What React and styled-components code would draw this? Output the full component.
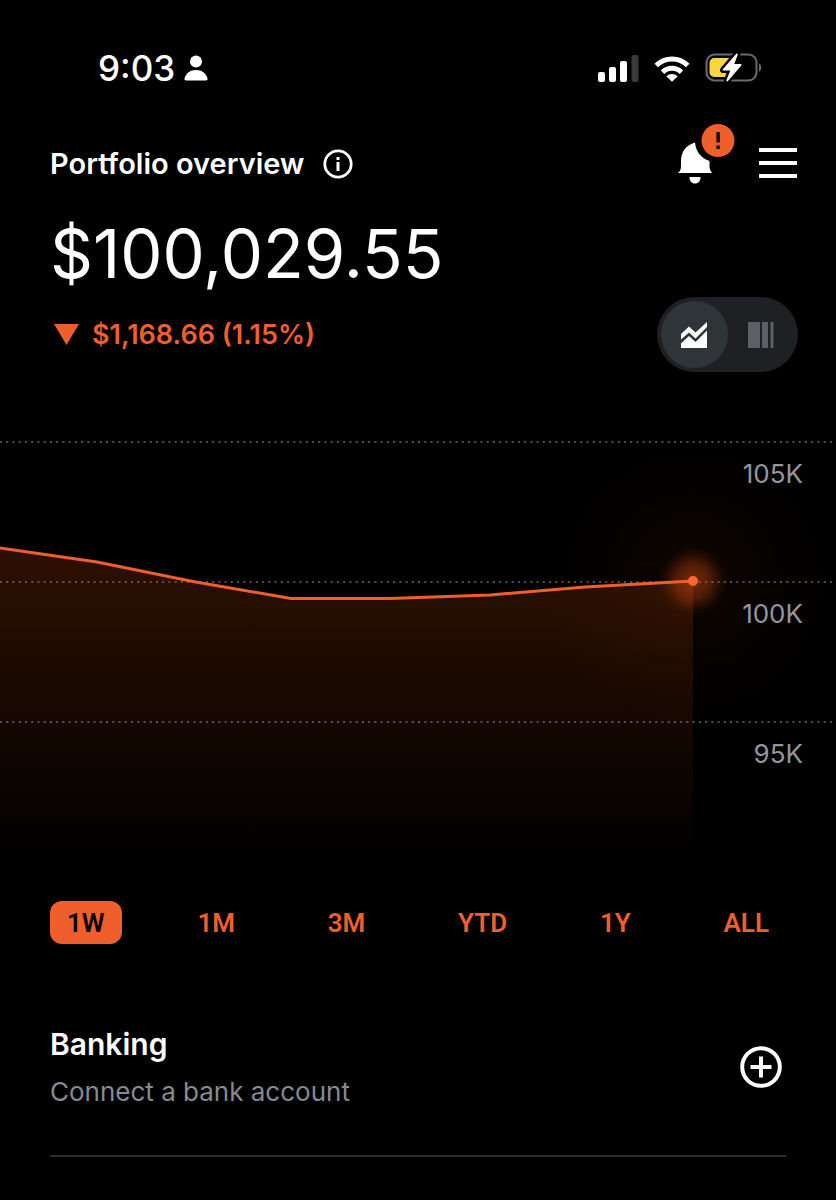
import React, { useState } from "react";
import styled, { createGlobalStyle } from "styled-components";

const ORANGE = "#ef5f2b";

const GlobalStyle = createGlobalStyle`
  * { box-sizing: border-box; }
  body {
    margin: 0;
    background: #000;
    color: #fff;
    font-family: Inter, "Liberation Sans", sans-serif;
  }
  button { font: inherit; color: inherit; background: none; border: 0; padding: 0; cursor: pointer; }
  h1, h2, p { margin: 0; }
  svg { display: block; }
`;

const Screen = styled.main`
  min-height: 100vh;
  padding-top: 40px;
`;

const StatusBar = styled.div`
  display: flex;
  align-items: center;
  justify-content: space-between;
  height: 56px;
  padding: 0 73px 0 98px;
`;

const StatusGroup = styled.div`
  display: flex;
  align-items: center;
  gap: ${(p) => p.$gap}px;
`;

const Time = styled.span`
  font-size: 35px;
  line-height: 40px;
  font-weight: 500;
`;

const Header = styled.header`
  display: flex;
  align-items: center;
  justify-content: space-between;
  height: 80px;
  margin-top: 24px;
  padding: 6px 39px 0 50px;
`;

const TitleGroup = styled.div`
  display: flex;
  align-items: center;
  gap: 19px;
  padding-top: 2px;
`;

const Title = styled.h1`
  font-size: 29px;
  line-height: 40px;
  font-weight: 600;
`;

const Actions = styled.div`
  display: flex;
  align-items: center;
  gap: 22px;
`;

const Amount = styled.p`
  padding: 0 50px;
  margin-top: 14px;
  font-size: 67px;
  line-height: 80px;
  font-weight: 400;
`;

const ChangeRow = styled.div`
  display: flex;
  align-items: center;
  justify-content: space-between;
  margin-top: 3px;
  padding: 0 38px 0 54px;
`;

const Change = styled.p`
  display: flex;
  align-items: center;
  gap: 13px;
  color: ${ORANGE};
  font-size: 27px;
  line-height: 32px;
  font-weight: 600;
`;

const Toggle = styled.div`
  display: flex;
  justify-content: space-between;
  width: 141px;
  padding: 4px;
  border-radius: 38px;
  background: #1f2023;
`;

const ToggleButton = styled.button`
  display: grid;
  place-items: center;
  width: 67px;
  height: 67px;
  border-radius: 50%;
  background: ${(p) => (p.$active ? "#2f3439" : "transparent")};
  color: ${(p) => (p.$active ? "#fff" : "#5b6064")};
`;

const Chart = styled.svg`
  width: 100%;
  height: auto;
  margin-top: 28px;
`;

const AxisLabel = styled.text`
  font-size: 26px;
  font-weight: 400;
  fill: #94969c;
  text-anchor: end;
`;

const Ranges = styled.div`
  display: flex;
  justify-content: space-between;
  margin-top: 41px;
  padding: 0 50px;
`;

const RangeButton = styled.button`
  height: 43px;
  padding: 2px 17px 0;
  border-radius: 12px;
  font-family: Roboto, Inter, sans-serif;
  font-size: 26px;
  line-height: 41px;
  font-weight: 600;
  background: ${(p) => (p.$active ? ORANGE : "transparent")};
  color: ${(p) => (p.$active ? "#000" : ORANGE)};
`;

const Account = styled.section`
  display: flex;
  align-items: center;
  justify-content: space-between;
  margin: 80px 50px 0;
  padding: 0 4px 45px 0;
  border-bottom: 2px solid #2c2e32;
`;

const AccountName = styled.h2`
  font-size: 30px;
  line-height: 40px;
  font-weight: 600;
`;

const AccountNote = styled.p`
  margin-top: 10px;
  font-size: 26px;
  line-height: 36px;
  font-weight: 400;
  color: #858a90;
`;

const PersonIcon = () => (
  <svg width="24" height="26" viewBox="0 0 24 26" fill="#fff" aria-hidden="true">
    <circle cx="12" cy="6.5" r="6" />
    <path d="M2.200 25.500C.8 25.500.3 24.700.6 23.300 1.800 18.300 6.300 15 12 15s10.200 3.300 11.400 8.300c.3 1.400-.2 2.200-1.600 2.200z" />
  </svg>
);

const SignalIcon = () => (
  <svg width="41" height="27" viewBox="0 0 41 27" fill="#fff" aria-hidden="true">
    <rect x="0" y="17" width="7" height="10" rx="2" />
    <rect x="11" y="12" width="7" height="15" rx="2" />
    <rect x="22" y="6" width="7" height="21" rx="2" />
    <rect x="33.500" y="0" width="7" height="27" rx="2" fill="#3a3a3a" />
  </svg>
);

const WifiIcon = () => (
  <svg width="36" height="27" viewBox="0 0 36 27" aria-hidden="true">
    <g fill="none" stroke="#fff" strokeWidth="5">
      <path d="M2.300 10.500a22 22 0 0 1 31.400 0" />
      <path d="M8.600 17.200a13.300 13.300 0 0 1 18.800 0" />
    </g>
    <path d="M12.300 21.200a8.500 8.500 0 0 1 11.400 0L18 26.800z" fill="#fff" />
  </svg>
);

const BatteryIcon = () => (
  <svg width="58" height="32" viewBox="0 0 58 32" aria-hidden="true">
    <rect x="1.500" y="2.500" width="50" height="26" rx="8" fill="none" stroke="#6d6d6f" strokeWidth="2" />
    <path d="M54 11.500c3 .8 3 7.200 0 8z" fill="#6d6d6f" />
    <path d="M9.500 6H24V25H9.500a5 5 0 0 1-5-5V11a5 5 0 0 1 5-5z" fill="#fbd63f" />
    <path
      d="M31.500 1.500 17.800 17.300Q17 18.500 18.300 18.500H25.300L21.300 28.500Q21.700 30 23 29L36.300 13.400Q37 12 35.700 12H29.300L32.800 2.500Q32.700 1 31.500 1.500z"
      fill="#fff"
      stroke="#000"
      strokeWidth="5"
      strokeLinejoin="round"
      paintOrder="stroke"
    />
  </svg>
);

const InfoIcon = () => (
  <svg width="30" height="30" viewBox="0 0 30 30" aria-hidden="true">
    <circle cx="15" cy="15" r="13.200" fill="none" stroke="#fff" strokeWidth="2.800" />
    <path d="M13.500 8h3v3h-3zM13.500 13h3v9h-3z" fill="#fff" />
  </svg>
);

const BellIcon = () => (
  <svg width="60" height="62" viewBox="0 0 60 62" aria-hidden="true">
    <path
      d="M1 41c2.500-2 3-4 3-8V29C4 20 9 13 18 10.500 19 20 24 26 32.500 29v4c0 4 .5 6 3 8z"
      fill="#fff"
    />
    <path d="M12.500 45h11c0 4-2 6.500-5.500 6.500s-5.500-2.500-5.500-6.500z" fill="#fff" />
    <circle cx="41" cy="8.500" r="16.500" fill={ORANGE} />
    <path d="M39.300 0h3.600v10.500h-3.600zM39.300 13.500h3.600V17h-3.600z" fill="#1a0d08" />
  </svg>
);

const BellButton = styled.button`
  height: 62px;
  svg { overflow: visible; }
`;

const MenuIcon = () => (
  <svg width="38" height="30" viewBox="0 0 38 30" fill="#fff" aria-hidden="true">
    <path d="M0 0h38v4H0zM0 13h38v4H0zM0 26h38v4H0z" />
  </svg>
);

const DownIcon = () => (
  <svg width="25" height="21" viewBox="0 0 25 21" fill={ORANGE} aria-hidden="true">
    <path d="M0 0h25L12.500 21z" />
  </svg>
);

const LineModeIcon = () => (
  <svg width="26" height="26" viewBox="0 0 26 26" fill="currentColor" aria-hidden="true">
    <path d="M0 12 8 4.500l6.500 6L26 0v5L14.500 16.500 8 10.500 0 17.500z" />
    <path d="M0 21.500 8 14l6.500 6L26 8.500V26H0z" />
  </svg>
);

const BarModeIcon = () => (
  <svg width="26" height="26" viewBox="0 0 26 26" fill="currentColor" aria-hidden="true">
    <path d="M0 0h12v26H0zM14 0h6v26h-6zM22.500 0h3v26h-3z" />
  </svg>
);

const PlusIcon = () => (
  <svg width="42" height="42" viewBox="0 0 42 42" aria-hidden="true">
    <circle cx="21" cy="21" r="18.800" fill="none" stroke="#fff" strokeWidth="4" />
    <path d="M10.500 21h21M21 10.500v21" stroke="#fff" strokeWidth="4" />
  </svg>
);

const TREND = "M0 148 97 162 193 181.500 291 198.500H390L490 195 585 187 693 181";
const GRID = [
  { label: "105K", y: 42 },
  { label: "100K", y: 182 },
  { label: "95K", y: 322 },
];
const RANGES = ["1W", "1M", "3M", "YTD", "1Y", "ALL"];

function PortfolioChart() {
  return (
    <Chart viewBox="0 0 836 460" role="img" aria-label="Portfolio value over time">
      <defs>
        <linearGradient id="area" gradientUnits="userSpaceOnUse" x1="0" y1="148" x2="0" y2="455">
          <stop offset="0" stopColor="#ff5a0a" stopOpacity="0.18" />
          <stop offset="0.55" stopColor="#ff5a0a" stopOpacity="0.085" />
          <stop offset="1" stopColor="#ff5a0a" stopOpacity="0" />
        </linearGradient>
        <radialGradient id="halo">
          <stop offset="0" stopColor="#ff5a0a" stopOpacity="0.06" />
          <stop offset="0.5" stopColor="#ff5a0a" stopOpacity="0.022" />
          <stop offset="1" stopColor="#ff5a0a" stopOpacity="0" />
        </radialGradient>
        <radialGradient id="glow">
          <stop offset="0" stopColor="#ff5a14" stopOpacity="0.42" />
          <stop offset="0.5" stopColor="#ff5a14" stopOpacity="0.27" />
          <stop offset="0.8" stopColor="#ff5a14" stopOpacity="0.08" />
          <stop offset="1" stopColor="#ff5a14" stopOpacity="0" />
        </radialGradient>
      </defs>
      {GRID.map(({ label, y }) => (
        <line
          key={label}
          x1="0"
          y1={y}
          x2="832"
          y2={y}
          stroke="#505052"
          strokeWidth="2"
          strokeDasharray="2 4.240"
        />
      ))}
      <path d={`${TREND}V455H0z`} fill="url(#area)" />
      <circle cx="693" cy="181" r="150" fill="url(#halo)" />
      <circle cx="693" cy="181" r="34" fill="url(#glow)" />
      <path d={TREND} fill="none" stroke={ORANGE} strokeWidth="3" strokeLinejoin="round" />
      <circle cx="693" cy="181" r="5" fill="#ff6530" />
      {GRID.map(({ label, y }) => (
        <AxisLabel key={label} x="803" y={y + 41}>
          {label}
        </AxisLabel>
      ))}
    </Chart>
  );
}

export default function App() {
  const [mode, setMode] = useState("line");
  const [range, setRange] = useState("1W");

  return (
    <Screen>
      <GlobalStyle />
      <StatusBar>
        <StatusGroup $gap={9}>
          <Time>9:03</Time>
          <PersonIcon />
        </StatusGroup>
        <StatusGroup $gap={15}>
          <SignalIcon />
          <WifiIcon />
          <BatteryIcon />
        </StatusGroup>
      </StatusBar>

      <Header>
        <TitleGroup>
          <Title>Portfolio overview</Title>
          <button type="button" aria-label="About this overview">
            <InfoIcon />
          </button>
        </TitleGroup>
        <Actions>
          <BellButton type="button" aria-label="Notifications">
            <BellIcon />
          </BellButton>
          <button type="button" aria-label="Menu">
            <MenuIcon />
          </button>
        </Actions>
      </Header>

      <Amount>$100,029.55</Amount>
      <ChangeRow>
        <Change>
          <DownIcon />
          $1,168.66 (1.15%)
        </Change>
        <Toggle role="group" aria-label="Chart type">
          <ToggleButton
            type="button"
            aria-label="Line chart"
            aria-pressed={mode === "line"}
            $active={mode === "line"}
            onClick={() => setMode("line")}
          >
            <LineModeIcon />
          </ToggleButton>
          <ToggleButton
            type="button"
            aria-label="Allocation bars"
            aria-pressed={mode === "bars"}
            $active={mode === "bars"}
            onClick={() => setMode("bars")}
          >
            <BarModeIcon />
          </ToggleButton>
        </Toggle>
      </ChangeRow>

      <PortfolioChart />

      <Ranges role="group" aria-label="Time range">
        {RANGES.map((r) => (
          <RangeButton
            key={r}
            type="button"
            aria-pressed={r === range}
            $active={r === range}
            onClick={() => setRange(r)}
          >
            {r}
          </RangeButton>
        ))}
      </Ranges>

      <Account>
        <div>
          <AccountName>Banking</AccountName>
          <AccountNote>Connect a bank account</AccountNote>
        </div>
        <button type="button" aria-label="Connect a bank account">
          <PlusIcon />
        </button>
      </Account>
    </Screen>
  );
}
